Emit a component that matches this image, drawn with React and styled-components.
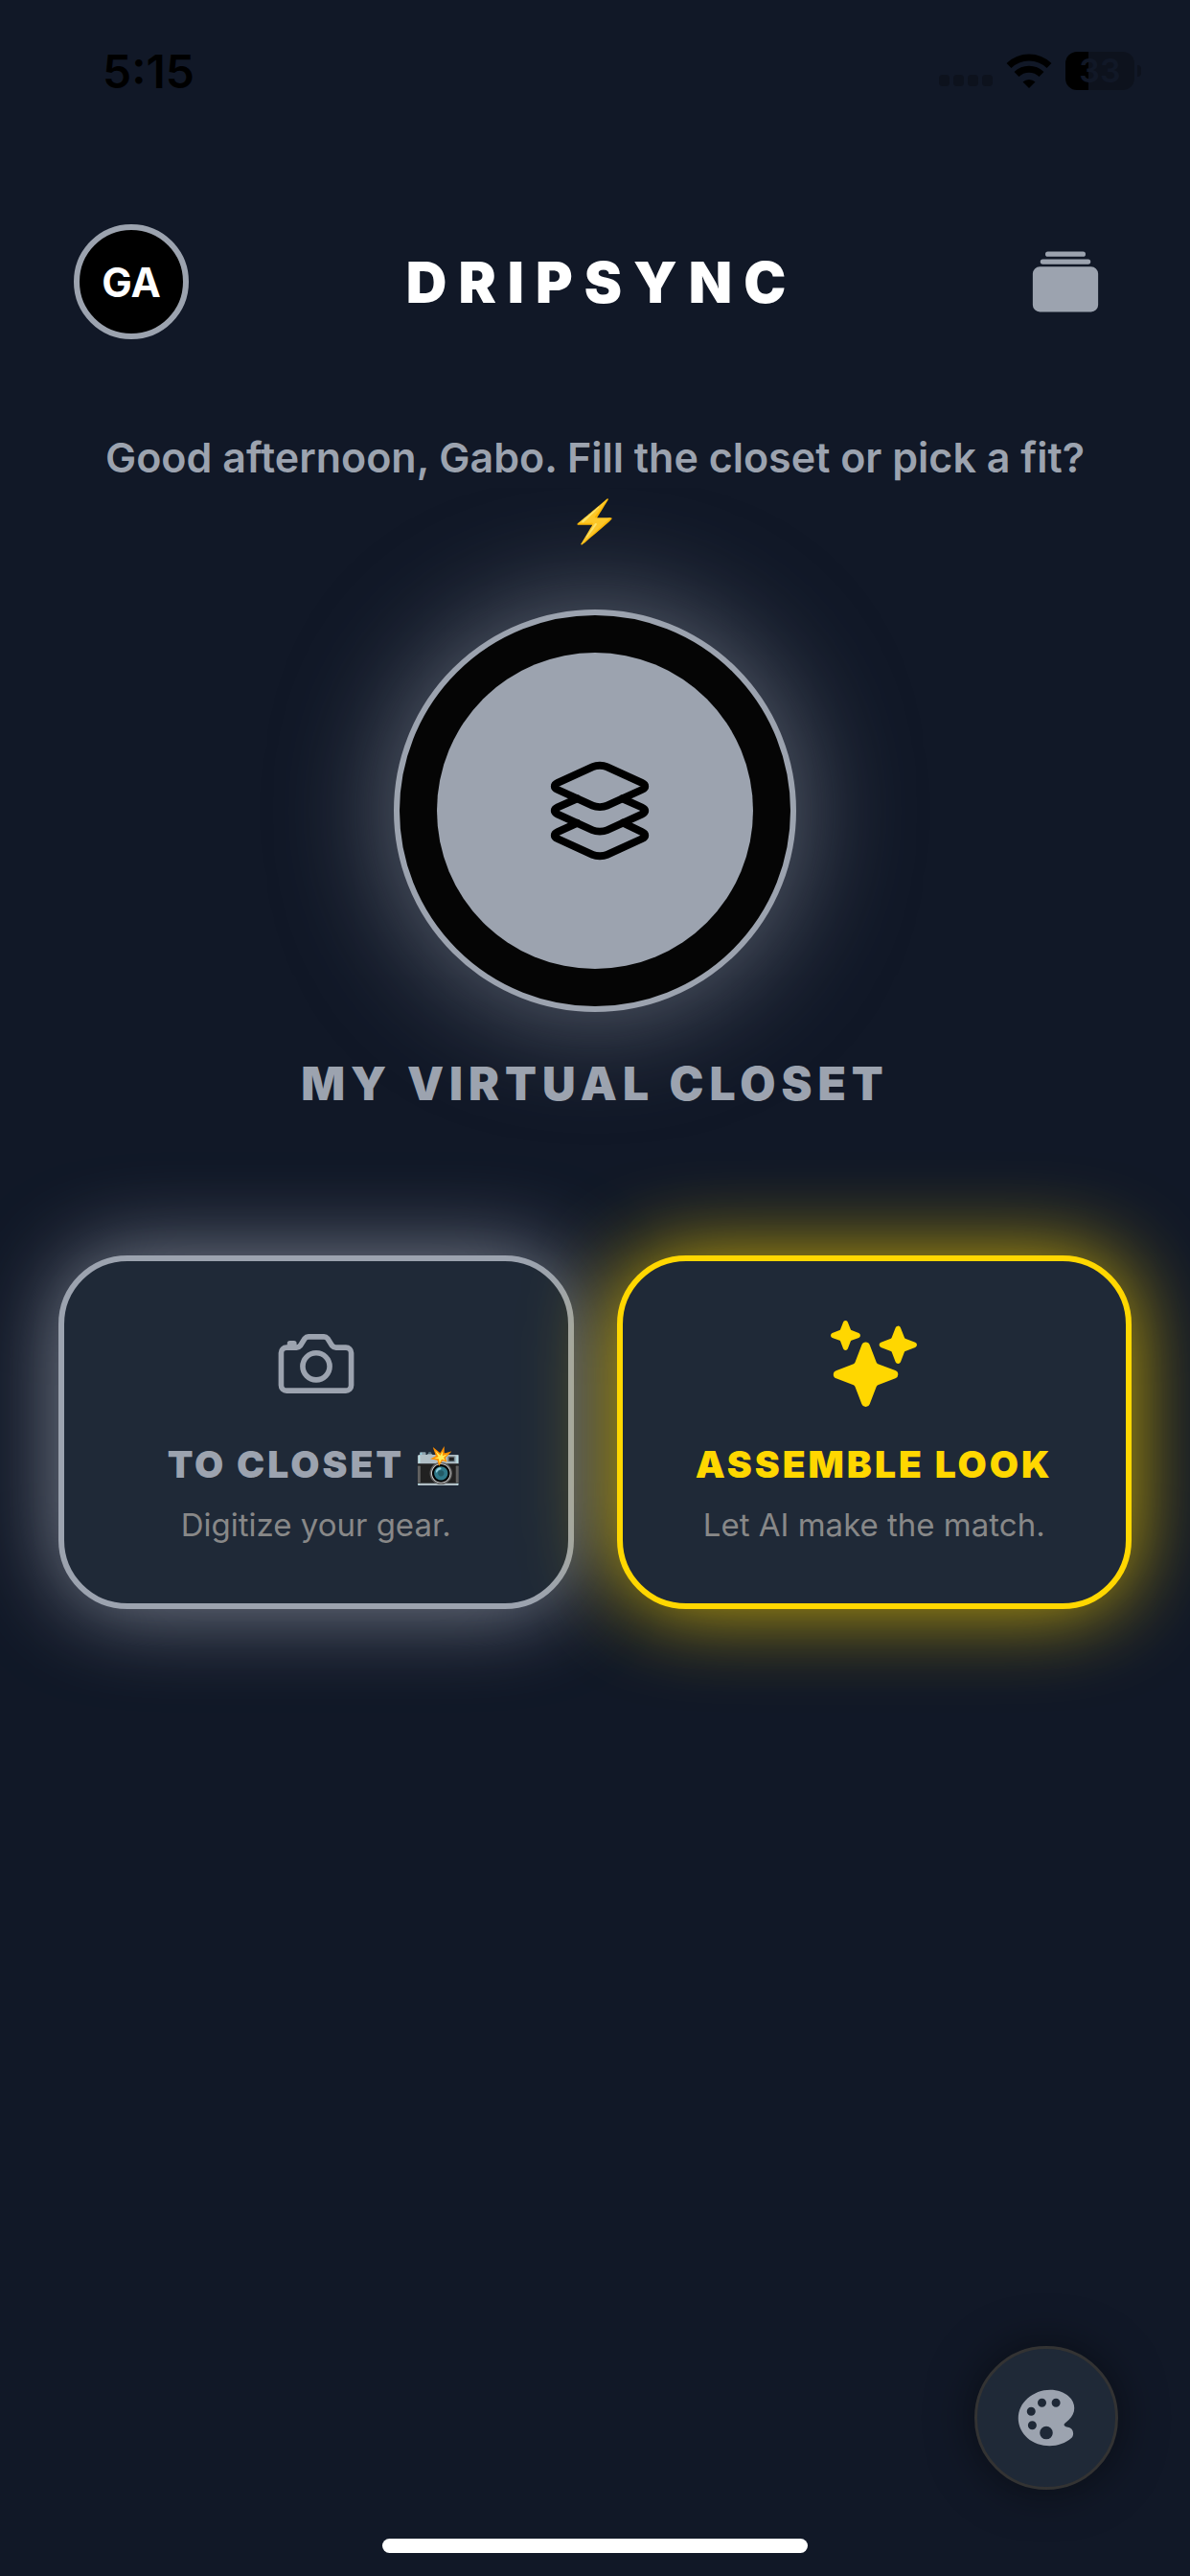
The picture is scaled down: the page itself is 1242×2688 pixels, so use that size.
import React from "react";
import styled, { createGlobalStyle } from "styled-components";
import {
  IoAlbums,
  IoLayersOutline,
  IoCameraOutline,
  IoSparkles,
  IoColorPalette
} from "react-icons/io5";

const GlobalStyle = createGlobalStyle`
  * {
    box-sizing: border-box;
  }

  body {
    margin: 0;
    background: #111827;
    font-family: Inter, "Liberation Sans", sans-serif;
  }

  button {
    padding: 0;
    font: inherit;
    cursor: pointer;
  }
`;

const Screen = styled.div`
  min-height: 100vh;
  display: flex;
  flex-direction: column;
  background: #111827;
`;

const StatusBar = styled.div`
  display: flex;
  align-items: center;
  justify-content: space-between;
  height: 148px;
  padding: 0 50px 0 107px;
  color: #000000;
`;

const Time = styled.time`
  font-size: 48px;
  font-weight: 600;
`;

const StatusIcons = styled.div`
  display: flex;
  align-items: center;
  gap: 14px;
`;

const Battery = styled.div`
  position: relative;
  width: 72px;
  height: 40px;
  margin-right: 8px;
  border-radius: 12px;
  background: linear-gradient(to right, #000000 24px, #0d121d 24px);
  color: #111827;
  font-size: 34px;
  font-weight: 600;
  line-height: 40px;
  text-align: center;

  &::after {
    content: "";
    position: absolute;
    top: 14px;
    right: -7px;
    width: 4px;
    height: 12px;
    border-radius: 0 4px 4px 0;
    background: #0d121d;
  }
`;

const Header = styled.header`
  display: flex;
  align-items: center;
  justify-content: space-between;
  padding: 86px 77px 0;
`;

const Avatar = styled.button`
  width: 120px;
  height: 120px;
  border: 6px solid #9ca3af;
  border-radius: 50%;
  background: #000000;
  color: #ffffff;
  font-size: 42px;
  font-weight: 700;
`;

const Brand = styled.h1`
  margin: 0;
  color: #ffffff;
  font-size: 59px;
  font-weight: 900;
  letter-spacing: 12px;
`;

const AlbumsButton = styled.button`
  display: flex;
  align-items: center;
  justify-content: center;
  width: 106px;
  height: 106px;
  border: 0;
  background: none;
  color: #9ca3af;
  font-size: 84px;
`;

const Greeting = styled.p`
  margin: 90px 90px 0;
  color: #9ca3af;
  font-size: 43px;
  font-weight: 600;
  line-height: 66px;
  text-align: center;
`;

const Closet = styled.section`
  display: flex;
  flex-direction: column;
  align-items: center;
  margin-top: 60px;
`;

const ClosetButton = styled.button`
  display: flex;
  align-items: center;
  justify-content: center;
  width: 420px;
  height: 420px;
  border: 6px solid #9ca3af;
  border-radius: 50%;
  background: #050505;
  box-shadow: 0 0 120px rgba(156, 163, 175, 0.6);
`;

const ClosetCore = styled.span`
  display: flex;
  align-items: center;
  justify-content: center;
  width: 330px;
  height: 330px;
  padding-left: 10px;
  border-radius: 50%;
  background: #9ca3af;
  color: #000000;
  font-size: 126px;
`;

const ClosetLabel = styled.h2`
  margin: 45px 0 0;
  color: #9ca3af;
  font-size: 48px;
  font-weight: 900;
  line-height: 60px;
  letter-spacing: 6px;
`;

const Actions = styled.div`
  display: grid;
  grid-template-columns: 1fr 1fr;
  gap: 45px;
  margin-top: 149px;
  padding: 0 61px;
`;

const ActionCard = styled.button`
  display: flex;
  flex-direction: column;
  align-items: center;
  padding: 62px 0 61px;
  border: 6px solid ${props => props.$tint};
  border-radius: 72px;
  background: #1f2937;
  box-shadow: 0 0 90px ${props => props.$glow};
  color: ${props => props.$tint};
`;

const CardIcon = styled.span`
  display: flex;
  font-size: 90px;
`;

const CardTitle = styled.span`
  margin-top: 36px;
  font-size: 39px;
  font-weight: 900;
  line-height: 48px;
  letter-spacing: 3px;
`;

const CardText = styled.span`
  margin-top: 18px;
  color: #888888;
  font-size: 33px;
  line-height: 42px;
`;

const Footer = styled.footer`
  display: flex;
  flex-direction: column;
  align-items: center;
  margin-top: auto;
  padding: 0 75px 24px;
`;

const PaletteButton = styled.button`
  display: flex;
  align-items: center;
  justify-content: center;
  align-self: flex-end;
  width: 150px;
  height: 150px;
  border: 3px solid #333333;
  border-radius: 50%;
  background: #1f2937;
  box-shadow: 0 0 48px rgba(0, 0, 0, 0.5);
  color: #9ca3af;
  font-size: 72px;
`;

const HomeIndicator = styled.div`
  width: 444px;
  height: 15px;
  margin-top: 51px;
  border-radius: 8px;
  background: #ffffff;
`;

const SignalDots = () => (
  <svg width="56" height="36" viewBox="0 0 56 36" fill="#0d121d">
    <rect x="0" y="22" width="11" height="12" rx="4" />
    <rect x="15" y="22" width="11" height="12" rx="4" />
    <rect x="30" y="22" width="11" height="12" rx="4" />
    <rect x="45" y="22" width="11" height="12" rx="4" />
  </svg>
);

const Wifi = () => (
  <svg width="48" height="36" viewBox="0 0 48 36">
    <g fill="none" stroke="#000000" strokeWidth="7">
      <path d="M3 12.5A30 30 0 0 1 45 12.5" />
      <path d="M11 21.5A18.5 18.5 0 0 1 37 21.5" />
    </g>
    <path d="M24 36L17.5 29.5A9.5 9.5 0 0 1 30.5 29.5Z" />
  </svg>
);

export default function App() {
  return (
    <Screen>
      <GlobalStyle />
      <StatusBar>
        <Time>5:15</Time>
        <StatusIcons>
          <SignalDots />
          <Wifi />
          <Battery>33</Battery>
        </StatusIcons>
      </StatusBar>
      <Header>
        <Avatar>GA</Avatar>
        <Brand>DRIPSYNC</Brand>
        <AlbumsButton aria-label="Albums">
          <IoAlbums />
        </AlbumsButton>
      </Header>
      <Greeting>
        Good afternoon, Gabo. Fill the closet or pick a fit? ⚡
      </Greeting>
      <Closet>
        <ClosetButton aria-label="Open closet">
          <ClosetCore>
            <IoLayersOutline />
          </ClosetCore>
        </ClosetButton>
        <ClosetLabel>MY VIRTUAL CLOSET</ClosetLabel>
      </Closet>
      <Actions>
        <ActionCard $tint="#9ca3af" $glow="rgba(156, 163, 175, 0.8)">
          <CardIcon>
            <IoCameraOutline />
          </CardIcon>
          <CardTitle>TO CLOSET 📸</CardTitle>
          <CardText>Digitize your gear.</CardText>
        </ActionCard>
        <ActionCard $tint="#ffd700" $glow="rgba(255, 215, 0, 0.8)">
          <CardIcon>
            <IoSparkles />
          </CardIcon>
          <CardTitle>ASSEMBLE LOOK</CardTitle>
          <CardText>Let AI make the match.</CardText>
        </ActionCard>
      </Actions>
      <Footer>
        <PaletteButton aria-label="Theme">
          <IoColorPalette />
        </PaletteButton>
        <HomeIndicator />
      </Footer>
    </Screen>
  );
}
